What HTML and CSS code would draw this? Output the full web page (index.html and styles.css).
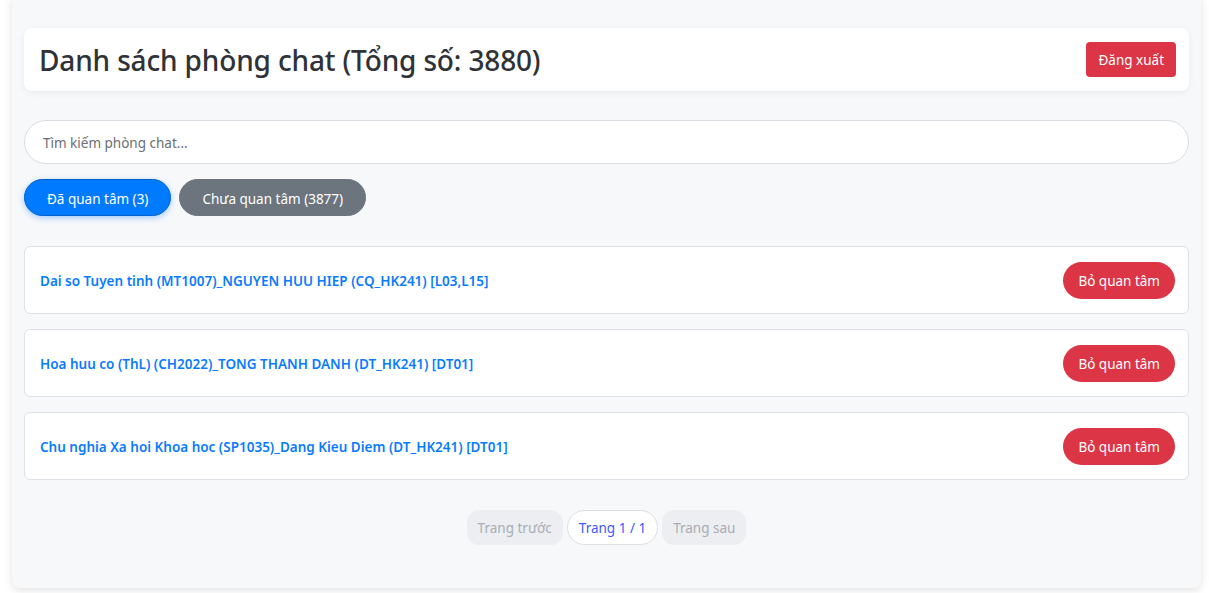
FILE: index.html
```html
<!DOCTYPE html>
<html lang="vi">
<head>
<meta charset="utf-8">
<title>Danh sách phòng chat</title>
<link rel="stylesheet" href="styles.css">
</head>
<body>
<div class="container">
  <header class="header">
    <h1 class="title">Danh sách phòng chat (Tổng số: 3880)</h1>
    <button class="btn-logout">Đăng xuất</button>
  </header>
  <input class="search" type="text" placeholder="Tìm kiếm phòng chat...">
  <div class="tabs">
    <button class="tab tab-active">Đã quan tâm (3)</button>
    <button class="tab tab-inactive">Chưa quan tâm (3877)</button>
  </div>
  <ul class="list">
    <li class="item">
      <a class="item-link" href="#">Dai so Tuyen tinh (MT1007)_NGUYEN HUU HIEP (CQ_HK241) [L03,L15]</a>
      <button class="btn-unfollow">Bỏ quan tâm</button>
    </li>
    <li class="item">
      <a class="item-link" href="#">Hoa huu co (ThL) (CH2022)_TONG THANH DANH (DT_HK241) [DT01]</a>
      <button class="btn-unfollow">Bỏ quan tâm</button>
    </li>
    <li class="item">
      <a class="item-link" href="#">Chu nghia Xa hoi Khoa hoc (SP1035)_Dang Kieu Diem (DT_HK241) [DT01]</a>
      <button class="btn-unfollow">Bỏ quan tâm</button>
    </li>
  </ul>
  <nav class="pagination">
    <button class="page-btn page-disabled">Trang trước</button>
    <span class="page-current">Trang 1 / 1</span>
    <button class="page-btn page-disabled">Trang sau</button>
  </nav>
</div>
</body>
</html>
```
FILE: styles.css
```css
* { box-sizing: border-box; }
html, body {
  margin: 0;
  padding: 0;
  background: #ffffff;
  font-family: "Noto Sans", "Open Sans", sans-serif;
}
body {
  padding: 0 8px 0 12px;
  height: 593px;
  overflow: hidden;
}
.container {
  width: 1189px;
  height: 594px;
  margin-top: -6px;
  padding: 34px 12px 0 12px;
  background: #f7f8fa;
  border-radius: 8px;
  box-shadow: 0 2px 8px rgba(0,0,0,0.12);
  display: flex;
  flex-direction: column;
}
.header {
  height: 63px;
  background: #ffffff;
  border-radius: 8px;
  box-shadow: 0 2px 6px rgba(0,0,0,0.06);
  display: flex;
  align-items: center;
  justify-content: space-between;
  padding: 0 13px 0 15px;
}
.title {
  margin: 0;
  font-size: 28px;
  font-weight: 500;
  color: #2f3236;
  letter-spacing: -0.15px;
}
.btn-logout {
  height: 35px;
  padding: 1px 12px 0;
  border: none;
  border-radius: 4px;
  background: #dc3545;
  color: #ffffff;
  font-family: inherit;
  font-size: 13.5px;
}
.search {
  margin-top: 29px;
  height: 44px;
  width: 100%;
  border: 1px solid #dadde1;
  border-radius: 22px;
  background: #ffffff;
  padding: 1px 18px 0;
  font-family: inherit;
  font-size: 13.5px;
  color: #333;
  outline: none;
}
.search::placeholder { color: #6c6f73; }
.tabs {
  margin-top: 15px;
  display: flex;
  gap: 8px;
}
.tab {
  height: 37px;
  padding: 2px 22px 0;
  border-radius: 19px;
  font-family: inherit;
  font-size: 13.5px;
  color: #ffffff;
}
.tab-active {
  background: #007bff;
  border: 1px solid #0062cc;
  box-shadow: 0 2px 6px rgba(0,123,255,0.35);
}
.tab-inactive {
  background: #6c757d;
  border: 1px solid #6c757d;
}
.list {
  list-style: none;
  margin: 30px 0 0 0;
  padding: 0;
  display: flex;
  flex-direction: column;
  gap: 15px;
}
.item {
  height: 68px;
  background: #ffffff;
  border: 1px solid #dee2e6;
  border-radius: 6px;
  display: flex;
  align-items: center;
  justify-content: space-between;
  padding: 0 13px 0 15px;
}
.item-link {
  color: #0a7bff;
  text-decoration: none;
  font-size: 13.5px;
  font-weight: 600;
  padding-top: 2px;
}
.btn-unfollow {
  height: 37px;
  padding: 2px 15px 0;
  border: none;
  border-radius: 19px;
  background: #dc3545;
  color: #ffffff;
  font-family: inherit;
  font-size: 13.5px;
}
.pagination {
  margin-top: 30px;
  display: flex;
  justify-content: center;
  gap: 4px;
}
.page-btn {
  height: 35px;
  padding: 1px 10px 0;
  border: 1px solid #eceef1;
  border-radius: 12px;
  background: #eceef1;
  color: #a9adb3;
  font-family: inherit;
  font-size: 13.5px;
}
.page-current {
  height: 35px;
  padding: 1px 11px 0;
  border: 1px solid #dcdfe3;
  border-radius: 18px;
  background: #ffffff;
  color: #3d5afe;
  font-size: 13.5px;
  display: flex;
  align-items: center;
}
```
